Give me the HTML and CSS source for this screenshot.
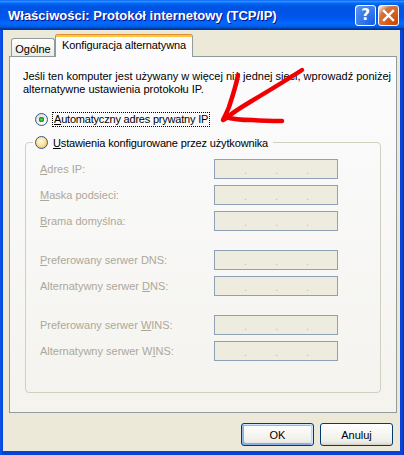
FILE: index.html
```html
<!DOCTYPE html>
<html lang="pl">
<head>
<meta charset="utf-8">
<title>Właściwości: Protokół internetowy (TCP/IP)</title>
<link rel="stylesheet" href="styles.css">
</head>
<body>
<div class="window">
  <div class="titlebar">
    <span class="title">Właściwości: Protokół internetowy (TCP/IP)</span>
    <div class="tb-buttons">
      <span class="tb-btn help">?</span>
      <span class="tb-btn close"><svg width="19" height="19" viewBox="0 0 19 19"><path d="M5 5 L14 14 M14 5 L5 14" stroke="#fff" stroke-width="2.4" stroke-linecap="square"/></svg></span>
    </div>
  </div>
  <div class="client">
    <div class="tabs">
      <div class="tab">Ogólne</div>
      <div class="tab active">Konfiguracja alternatywna</div>
    </div>
    <div class="panel">
      <p class="intro">Jeśli ten komputer jest używany w więcej niż jednej sieci, wprowadź poniżej<br>alternatywne ustawienia protokołu IP.</p>
      <div class="radio-row first">
        <span class="radio checked"></span>
        <span class="focus"><u>A</u>utomatyczny adres prywatny IP</span>
      </div>
      <fieldset class="group">
        <legend class="radio-row legend"><span class="radio hover"></span><span class="rlabel"><u>U</u>stawienia konfigurowane przez użytkownika</span></legend>
        <div class="fields">
          <div class="field"><span class="label"><u>A</u>dres IP:</span><span class="ip"><i>.</i><i>.</i><i>.</i></span></div>
          <div class="field"><span class="label"><u>M</u>aska podsieci:</span><span class="ip"><i>.</i><i>.</i><i>.</i></span></div>
          <div class="field"><span class="label"><u>B</u>rama domyślna:</span><span class="ip"><i>.</i><i>.</i><i>.</i></span></div>
          <div class="field sep"><span class="label"><u>P</u>referowany serwer DNS:</span><span class="ip"><i>.</i><i>.</i><i>.</i></span></div>
          <div class="field"><span class="label">Alternatywny serwer <u>D</u>NS:</span><span class="ip"><i>.</i><i>.</i><i>.</i></span></div>
          <div class="field sep"><span class="label">Preferowany serwer <u>W</u>INS:</span><span class="ip"><i>.</i><i>.</i><i>.</i></span></div>
          <div class="field"><span class="label">Alternatywny serwer W<u>I</u>NS:</span><span class="ip"><i>.</i><i>.</i><i>.</i></span></div>
        </div>
      </fieldset>
    </div>
    <div class="buttons">
      <button class="btn default">OK</button>
      <button class="btn">Anuluj</button>
    </div>
  </div>
  <svg class="arrow" width="404" height="455" viewBox="0 0 404 455">
    <g fill="none" stroke="#F00000" stroke-width="4.5" stroke-linecap="round" stroke-linejoin="round">
      <path d="M302 70 C290 78 270 90 250 102 C240 108 232 113 225 119"/>
      <path d="M238 75 C236 86 232 98 229 107 C227 112 225 116 223 120"/>
      <path d="M225 117 C232 119 240 120 252 120 C265 121 275 121 282 121"/>
    </g>
  </svg>
</div>
</body>
</html>
```

FILE: styles.css
```css
* { box-sizing: border-box; }
html, body { margin: 0; padding: 0; }
body {
  width: 404px;
  height: 455px;
  overflow: hidden;
  font-family: "Liberation Sans", Arial, sans-serif;
  font-size: 11px;
  color: #000;
  background: #0842D6;
}
.window {
  position: relative;
  width: 404px;
  height: 455px;
  display: flex;
  flex-direction: column;
  background: linear-gradient(to right, #0A56E8 0, #0842D6 3px, #0842D6 400px, #0A46D8 402px, #0831B0 404px);
}
.titlebar {
  height: 30px;
  flex: none;
  display: flex;
  align-items: center;
  justify-content: space-between;
  padding: 0 5px 0 8px;
  background: linear-gradient(to bottom, #0058EE 0%, #3593FF 4%, #288EFF 6%, #127DFF 8%, #036FFC 10%, #0262EE 14%, #0057E5 20%, #0054E3 24%, #0055EB 56%, #005BF5 66%, #026AFE 76%, #0062EF 86%, #0052D6 92%, #0040AB 94%, #003092 100%);
}
.title {
  color: #fff;
  font-weight: bold;
  font-size: 13px;
  text-shadow: 1px 1px #0F1089;
  white-space: nowrap;
}
.tb-buttons { display: flex; gap: 2px; }
.tb-btn {
  width: 21px;
  height: 21px;
  border: 1px solid #fff;
  border-radius: 3px;
  display: flex;
  align-items: center;
  justify-content: center;
  color: #fff;
}
.help {
  background: radial-gradient(circle at 90% 90%, #1A5FEA 0%, #3A7BE8 55%, #5A8FEE 90%, #E6EEFF 100%);
  font-weight: bold;
  font-size: 15px;
  font-family: "DejaVu Sans", sans-serif;
}
.close {
  background: radial-gradient(circle at 90% 90%, #CC4600 0%, #DC6527 55%, #CD7546 70%, #fff 100%);
}
.client {
  flex: 1;
  margin: 0 4px 4px 3px;
  background: #ECE9D8;
  padding: 4px 3px 5px 6px;
  display: flex;
  flex-direction: column;
}
.tabs {
  height: 23px;
  flex: none;
  display: flex;
  align-items: flex-end;
  padding-left: 2px;
  margin-bottom: -1px;
  position: relative;
  z-index: 1;
}
.tab {
  height: 18px;
  margin-bottom: 1px;
  padding: 0;
  border: 1px solid #919B9C;
  border-bottom: none;
  border-radius: 3px 3px 0 0;
  background: linear-gradient(#FFFFFF, #F3F3EF 60%, #ECEBE6);
  display: flex;
  align-items: center;
  width: 44px;
  justify-content: center;
  white-space: nowrap;
  padding-top: 2px;
}
.tab.active {
  width: 138px;
  height: 23px;
  margin-bottom: 0;
  border-top: none;
  background: linear-gradient(#E68B2C 0 1px, #FFC83C 1px 3px, #FCFCFE 3px);
  padding-top: 0;
  padding-bottom: 1px;
  letter-spacing: -0.1px;
}
.panel {
  flex: none;
  height: 357px;
  border: 1px solid #919B9C;
  background: linear-gradient(#FCFCFE, #F4F3EE);
  padding: 13px 13px 0 13px;
}
.intro {
  margin: 0;
  line-height: 13px;
  white-space: nowrap;
}
.radio-row {
  display: flex;
  align-items: center;
  height: 15px;
}
.radio-row.first {
  margin-top: 16px;
  padding-left: 12px;
}
.radio {
  width: 13px;
  height: 13px;
  flex: none;
  border-radius: 50%;
  border: 1px solid #2F5A8C;
  margin-right: 4px;
  background: radial-gradient(circle at 65% 70%, #F2F1EB 0, #DCD8CE 70%, #CFCBC0 100%);
}
.radio.checked {
  background:
    radial-gradient(circle at 50% 50%, #6BE060 0, #2BA92B 1.6px, #1C8E1C 2.6px, rgba(28,142,28,0) 3px),
    radial-gradient(circle at 65% 70%, #FFFFFF 0, #E6E4DC 70%, #D3D0C6 100%);
}
.radio.hover {
  background: radial-gradient(circle at 45% 40%, #FFF9E6 0, #FBE4A5 45%, #F0C25C 80%, #E2A634 100%);
}
.focus {
  border: 1px dotted #000;
  padding: 0 1px;
  line-height: 13px;
  letter-spacing: -0.2px;
}
.group {
  margin: 8px 0 0 2px;
  width: 356px;
  border: 1px solid #D0D0BF;
  border-radius: 4px;
  padding: 0 0 31px 7px;
}
.legend {
  padding: 0 5px 0 2px;
}
.rlabel { margin-left: 1px; letter-spacing: -0.15px; }
.fields {
  margin-top: 9px;
  padding-left: 7px;
  display: flex;
  flex-direction: column;
  gap: 6px;
}
.field {
  display: flex;
  align-items: center;
  height: 20px;
  color: #ACA899;
}
.field.sep { margin-top: 13px; }
.label {
  width: 174px;
  flex: none;
}
.ip {
  width: 124px;
  height: 20px;
  border: 1px solid #8FA1B4;
  background: #EEEBDF;
  display: flex;
  padding-left: 29px;
  align-items: flex-end;
  line-height: 15px;
}
.ip i {
  font-style: normal;
  width: 32px;
  color: #C4C1B4;
}
.buttons {
  display: flex;
  justify-content: flex-end;
  gap: 6px;
  margin-top: 10px;
  padding-right: 4px;
}
.btn {
  width: 73px;
  height: 23px;
  border: 1px solid #003C74;
  border-radius: 3px;
  background: linear-gradient(#FFFFFF, #F4F3EE 60%, #ECEBE6 86%, #D6D0C5);
  font-family: "Liberation Sans", Arial, sans-serif;
  font-size: 11px;
  color: #000;
  padding: 0;
}
.btn.default {
  box-shadow: inset -1px 1px #CEE7FF, inset 1px 2px #98B8EA, inset -2px 0 #BCD4F6, inset 1px -1px #89ADE4, inset 2px -2px #89ADE4;
}
.arrow {
  position: absolute;
  left: 0;
  top: 0;
  pointer-events: none;
}
```
